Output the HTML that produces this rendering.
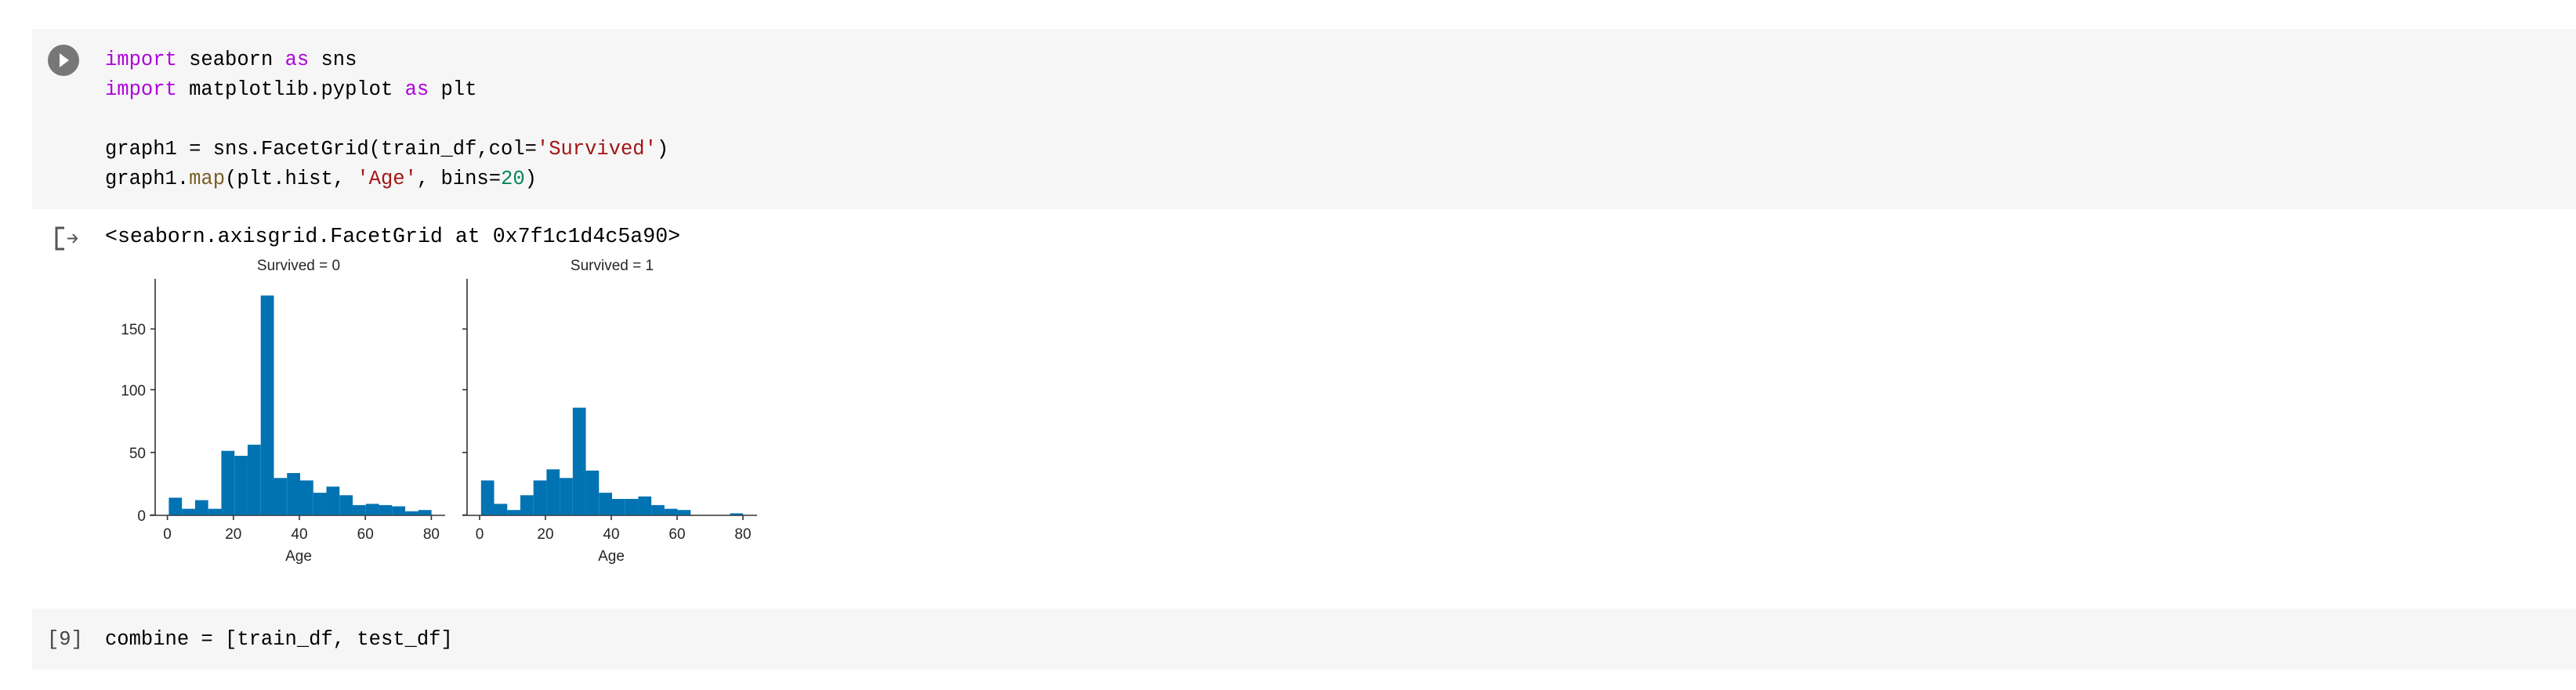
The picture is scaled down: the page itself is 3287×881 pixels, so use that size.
<!DOCTYPE html>
<html><head><meta charset="utf-8"><style>
html,body{margin:0;padding:0;width:3287px;height:881px;background:#fff;overflow:hidden;position:relative}
.cell{position:absolute;left:41px;right:0;background:#f6f6f6}
.code{position:absolute;font-family:"Liberation Mono",monospace;font-size:25.5px;color:#000;white-space:pre;line-height:38px}
.kw{color:#af00db}.st{color:#a31515}.nu{color:#098658}.fn{color:#795e26}
</style></head><body>
<div class="cell" style="top:37px;height:230px"></div>
<div class="cell" style="top:777px;height:78px"></div>
<svg style="position:absolute;left:0;top:0" width="3287" height="881">
<circle cx="81" cy="77" r="20" fill="#777"/>
<path d="M76 68 L88 77 L76 86 Z" fill="#fff"/>
<path d="M82 291 H72 V318 H82" fill="none" stroke="#555" stroke-width="3"/>
<path d="M86 304.5 H98 M93 299 L98 304.5 L93 310" fill="none" stroke="#555" stroke-width="2"/>
<g font-family="Liberation Sans,sans-serif" font-size="19" fill="#262626">
<text x="381" y="345" text-anchor="middle">Survived = 0</text>
<text x="781" y="345" text-anchor="middle">Survived = 1</text>
</g>
<g stroke="#333" stroke-width="1.6" fill="none">
<path d="M198 356 V658 M191 658 H568"/>
<path d="M198 420 h-6 M198 497.6 h-6 M198 577.7 h-6 M198 657.5 h-6"/>
<path d="M213.6 658 v6 M297.8 658 v6 M382 658 v6 M466.2 658 v6 M550.4 658 v6"/>
<path d="M596 356 V658 M590 658 H966"/>
<path d="M596 420 h-6 M596 497.6 h-6 M596 577.7 h-6 M596 657.5 h-6"/>
<path d="M612 658 v6 M696 658 v6 M780 658 v6 M864 658 v6 M948 658 v6"/>
</g>
<g transform="translate(215.4,657.5) scale(16.76,-1.574)" fill="#0173b2">
<rect x="0" y="0" width="1" height="14"/><rect x="1" y="0" width="1" height="5"/><rect x="2" y="0" width="1" height="12"/><rect x="3" y="0" width="1" height="5"/><rect x="4" y="0" width="1" height="52"/><rect x="5" y="0" width="1" height="48"/><rect x="6" y="0" width="1" height="57"/><rect x="7" y="0" width="1" height="178"/><rect x="8" y="0" width="1" height="30"/><rect x="9" y="0" width="1" height="34"/><rect x="10" y="0" width="1" height="28"/><rect x="11" y="0" width="1" height="18"/><rect x="12" y="0" width="1" height="23"/><rect x="13" y="0" width="1" height="16"/><rect x="14" y="0" width="1" height="8"/><rect x="15" y="0" width="1" height="9"/><rect x="16" y="0" width="1" height="8"/><rect x="17" y="0" width="1" height="7"/><rect x="18" y="0" width="1" height="3"/><rect x="19" y="0" width="1" height="4"/>
</g>
<g transform="translate(613.8,657.5) scale(16.72,-1.574)" fill="#0173b2">
<rect x="0" y="0" width="1" height="28"/><rect x="1" y="0" width="1" height="9"/><rect x="2" y="0" width="1" height="4"/><rect x="3" y="0" width="1" height="16"/><rect x="4" y="0" width="1" height="28"/><rect x="5" y="0" width="1" height="37"/><rect x="6" y="0" width="1" height="30"/><rect x="7" y="0" width="1" height="87"/><rect x="8" y="0" width="1" height="36"/><rect x="9" y="0" width="1" height="18"/><rect x="10" y="0" width="1" height="13"/><rect x="11" y="0" width="1" height="13"/><rect x="12" y="0" width="1" height="15"/><rect x="13" y="0" width="1" height="8"/><rect x="14" y="0" width="1" height="5"/><rect x="15" y="0" width="1" height="4"/><rect x="19" y="0" width="1" height="1.3"/>
</g>
<g font-family="Liberation Sans,sans-serif" font-size="19" fill="#262626" text-anchor="end">
<text x="186" y="427">150</text><text x="186" y="505">100</text><text x="186" y="585">50</text><text x="186" y="665">0</text>
</g>
<g font-family="Liberation Sans,sans-serif" font-size="19" fill="#262626" text-anchor="middle">
<text x="213.6" y="688">0</text><text x="297.8" y="688">20</text><text x="382" y="688">40</text><text x="466.2" y="688">60</text><text x="550.4" y="688">80</text>
<text x="612" y="688">0</text><text x="696" y="688">20</text><text x="780" y="688">40</text><text x="864" y="688">60</text><text x="948" y="688">80</text>
<text x="381" y="716">Age</text><text x="780" y="716">Age</text>
</g>
</svg>
<div class="code" style="left:134px;top:58px"><span class="kw">import</span> seaborn <span class="kw">as</span> sns
<span class="kw">import</span> matplotlib.pyplot <span class="kw">as</span> plt

graph1 = sns.FacetGrid(train_df,col=<span class="st">'Survived'</span>)
graph1.<span class="fn">map</span>(plt.hist, <span class="st">'Age'</span>, bins=<span class="nu">20</span>)</div>
<div class="code" style="left:134px;top:283px;font-size:26.6px">&lt;seaborn.axisgrid.FacetGrid at 0x7f1c1d4c5a90&gt;</div>
<div class="code" style="left:60px;top:798px;color:#444">[9]</div>
<div class="code" style="left:134px;top:798px">combine = [train_df, test_df]</div>
</body></html>
